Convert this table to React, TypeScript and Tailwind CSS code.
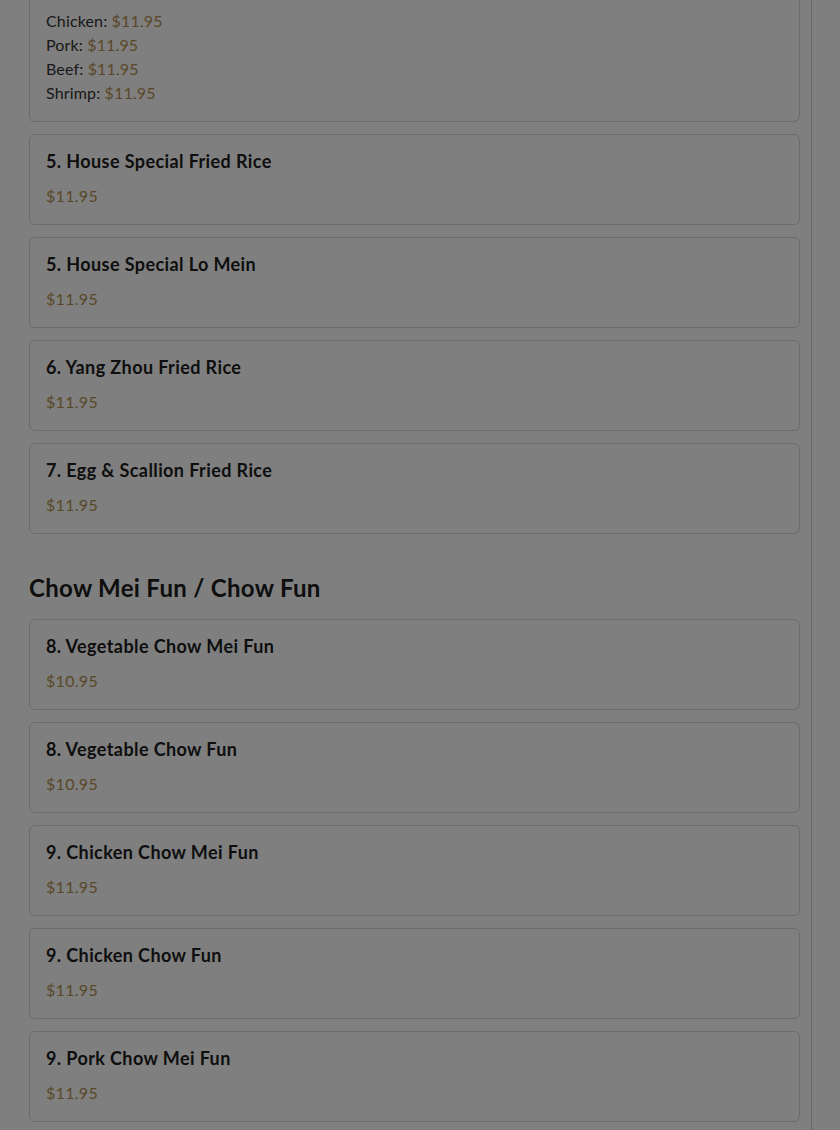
const groupOne = [
  { name: "5. House Special Fried Rice", price: "$11.95" },
  { name: "5. House Special Lo Mein", price: "$11.95" },
  { name: "6. Yang Zhou Fried Rice", price: "$11.95" },
  { name: "7. Egg & Scallion Fried Rice", price: "$11.95" },
];

const chowFun = [
  { name: "8. Vegetable Chow Mei Fun", price: "$10.95" },
  { name: "8. Vegetable Chow Fun", price: "$10.95" },
  { name: "9. Chicken Chow Mei Fun", price: "$11.95" },
  { name: "9. Chicken Chow Fun", price: "$11.95" },
  { name: "9. Pork Chow Mei Fun", price: "$11.95" },
];

const options = [
  { label: "Chicken", price: "$11.95" },
  { label: "Pork", price: "$11.95" },
  { label: "Beef", price: "$11.95" },
  { label: "Shrimp", price: "$11.95" },
];

function MenuCard({ name, price }: { name: string; price: string }) {
  return (
    <div className="rounded-md border border-[#d6d6d6] bg-white px-4 py-4">
      <h3 className="text-[18px] font-bold leading-[20px] tracking-[0.4px] text-[#1c1c1c]">{name}</h3>
      <p className="mt-[13px] text-[16px] leading-6 tracking-[0.3px] text-[#b3904f]">{price}</p>
    </div>
  );
}

export default function App() {
  return (
    <div
      className="relative h-[1130px] overflow-hidden bg-white"
      style={{ fontFamily: "Lato, 'Open Sans', sans-serif" }}
    >
      <div className="w-[812px] border-r border-[#d0d0d0] h-full pl-[29px] pr-[11px]">
        <div className="rounded-b-md border-x border-b border-[#d6d6d6] bg-white px-4 pt-[9px] pb-4">
          {options.map((o) => (
            <p key={o.label} className="text-[16px] leading-6 tracking-[0.15px] text-[#333]">
              {o.label}: <span className="text-[#b3904f]">{o.price}</span>
            </p>
          ))}
        </div>

        <div className="mt-3 flex flex-col gap-3">
          {groupOne.map((item) => (
            <MenuCard key={item.name} {...item} />
          ))}
        </div>

        <h2 className="mt-[38px] mb-[15px] text-[24px] font-bold leading-8 tracking-[0.3px] text-[#1c1c1c]">
          Chow Mei Fun / Chow Fun
        </h2>

        <div className="flex flex-col gap-3">
          {chowFun.map((item) => (
            <MenuCard key={item.name} {...item} />
          ))}
        </div>
      </div>

      <div className="absolute inset-0 bg-black/50" />
    </div>
  );
}
